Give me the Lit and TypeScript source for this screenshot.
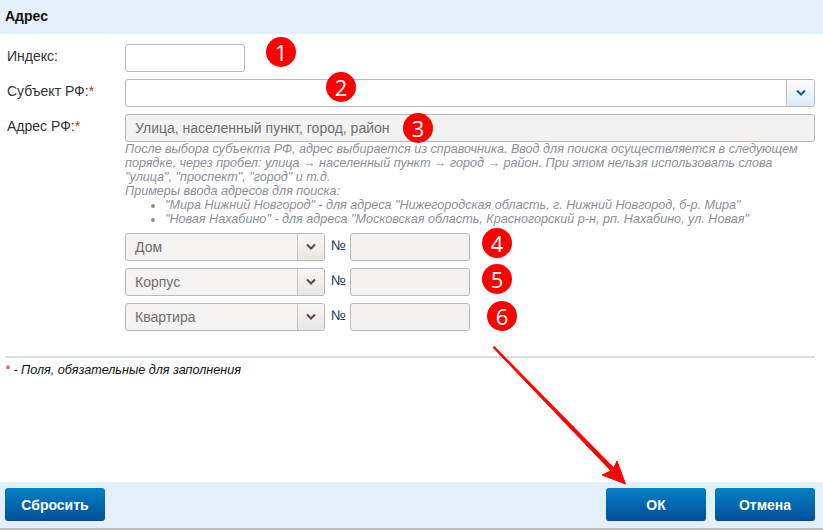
import { LitElement, html, css } from "lit";
import { customElement } from "lit/decorators.js";

const chevron = (color: string) => html`<svg width="12" height="8" viewBox="0 0 12 8"><path d="M2 1.5 L6 5.5 L10 1.5" fill="none" stroke=${color} stroke-width="2"/></svg>`;

@customElement("app-root")
export class AppRoot extends LitElement {
  static styles = css`
    :host { display: flex; flex-direction: column; position: relative; width: 823px; height: 530px; overflow: hidden; background: #fff; font-family: "Liberation Sans", Arial, sans-serif; font-size: 14px; color: #222; box-sizing: border-box; }
    .head { height: 34px; flex: none; background: #e3effb; padding: 0 5px; font-weight: bold; font-size: 14px; line-height: 33px; color: #111; }
    .body { flex: 1; padding: 10px 8px 0 7px; display: flex; flex-direction: column; }
    .row { display: grid; grid-template-columns: 118px 1fr; margin-bottom: 7px; }
    .row.addr { margin-bottom: 0; }
    .label { line-height: 25px; font-size: 14px; color: #333; }
    .req { color: #e02020; }
    .input { box-sizing: border-box; height: 28px; border: 1px solid #b9b9b9; border-radius: 3px; background: #fff; }
    .input.short { width: 120px; }
    .combo { display: flex; justify-content: flex-end; overflow: hidden; }
    .btn { width: 27px; border-left: 1px solid #c4c4c4; display: flex; align-items: center; justify-content: center; background: linear-gradient(#fbfdff, #dcebf8); }
    .disabled { background: #f3f2f0; color: #6e6e6e; font-size: 14px; line-height: 26px; padding: 0 9px; }
    .help { margin: 0 0 0 118px; font-style: italic; font-size: 12.6px; line-height: 14px; color: #8a9098; white-space: nowrap; height: 91px; box-sizing: border-box; }
    .help ul { margin: 0; padding: 0 0 0 40px; }
    .sub { display: flex; align-items: flex-start; margin: 0 0 7px 118px; }
    .select { box-sizing: border-box; width: 200px; height: 28px; border: 1px solid #b9b9b9; border-radius: 3px; background: #f4f3f1; display: flex; overflow: hidden; }
    .select span { flex: 1; padding-left: 9px; line-height: 26px; color: #6e6e6e; font-size: 14px; }
    .select .arrow { flex: none; width: 26px; border-left: 1px solid #c4c4c4; display: flex; align-items: center; justify-content: center; background: linear-gradient(#f7f6f4, #e9e7e3); }
    .no { width: 25px; padding-left: 6px; box-sizing: border-box; font-size: 14px; line-height: 24px; color: #1d3a5c; }
    .num { box-sizing: border-box; width: 120px; height: 28px; border: 1px solid #b9b9b9; border-radius: 3px; background: #f3f2f0; }
    .note { margin: 18px 0 0 -2px; border-top: 2px solid #d5dfe3; padding-top: 5px; font-style: italic; font-size: 12.6px; line-height: 14px; color: #111; }
    .foot { flex: none; box-sizing: border-box; height: 48px; background: #e3effb; border-bottom: 2px solid #bdbdbd; display: flex; align-items: flex-start; padding: 6px 8px 0 5px; gap: 9px; }
    .action { box-sizing: border-box; width: 100px; height: 33px; border: 0; border-radius: 3px; background: linear-gradient(#0580c6, #004f98); color: #fff; font-family: inherit; font-size: 14px; font-weight: bold; padding: 0; }
    .spacer { flex: 1; }
    .badge { position: absolute; width: 30px; height: 30px; border-radius: 50%; background: #fe0000; color: #fff; font-size: 22px; line-height: 30px; text-align: center; font-family: "Open Sans", sans-serif; }
    .arrowline { position: absolute; left: 0; top: 0; pointer-events: none; }
  `;

  private badges: [string, number, number][] = [
    ["1", 266, 37], ["2", 326, 72], ["3", 403, 113],
    ["4", 482, 228], ["5", 482, 264], ["6", 487, 301],
  ];

  render() {
    return html`
      <div class="head">Адрес</div>
      <div class="body">
        <div class="row"><div class="label">Индекс:</div><div class="input short"></div></div>
        <div class="row"><div class="label">Субъект РФ:<span class="req">*</span></div>
          <div class="input combo"><div class="btn">${chevron("#0a5fa8")}</div></div></div>
        <div class="row addr"><div class="label">Адрес РФ:<span class="req">*</span></div>
          <div class="input disabled">Улица, населенный пункт, город, район</div></div>
        <div class="help">После выбора субъекта РФ, адрес выбирается из справочника. Ввод для поиска осуществляется в следующем<br>порядке, через пробел: улица → населенный пункт → город → район. При этом нельзя использовать слова<br>"улица", "проспект", "город" и т.д.<br>Примеры ввода адресов для поиска:
          <ul>
            <li>"Мира Нижний Новгород" - для адреса "Нижегородская область, г. Нижний Новгород, б-р. Мира"</li>
            <li>"Новая Нахабино" - для адреса "Московская область, Красногорский р-н, рп. Нахабино, ул. Новая"</li>
          </ul>
        </div>
        ${["Дом", "Корпус", "Квартира"].map((t) => html`
          <div class="sub">
            <div class="select"><span>${t}</span><div class="arrow">${chevron("#5a4a40")}</div></div>
            <div class="no">№</div>
            <div class="num"></div>
          </div>`)}
        <div class="note"><span class="req">*</span> - Поля, обязательные для заполнения</div>
      </div>
      <div class="foot">
        <button class="action">Сбросить</button>
        <div class="spacer"></div>
        <button class="action">ОК</button>
        <button class="action">Отмена</button>
      </div>
      ${this.badges.map(([t, x, y]) => html`<div class="badge" style="left:${x}px;top:${y}px">${t}</div>`)}
      <svg class="arrowline" width="823" height="530" viewBox="0 0 823 530">
        <path d="M493 347.5 L494.2 346.3 L614.5 468.5 L611.5 471.5 Z" fill="#fe0000" stroke="#fe0000" stroke-width="0.8" stroke-linejoin="round"/>
        <path d="M625.5 484 L602 475 L613 470 L617 461 Z" fill="#fe0000" stroke="#fe0000" stroke-width="1" stroke-linejoin="round"/>
      </svg>
    `;
  }
}
